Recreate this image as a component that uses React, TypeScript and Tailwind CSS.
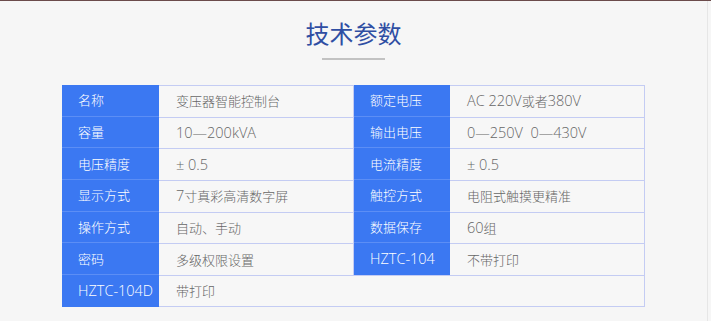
import React from "react";

const rows: [string, string, string, string][] = [
  ["名称", "变压器智能控制台", "额定电压", "AC 220V或者380V"],
  ["容量", "10—200kVA", "输出电压", "0—250V  0—430V"],
  ["电压精度", "± 0.5", "电流精度", "± 0.5"],
  ["显示方式", "7寸真彩高清数字屏", "触控方式", "电阻式触摸更精准"],
  ["操作方式", "自动、手动", "数据保存", "60组"],
  ["密码", "多级权限设置", "HZTC-104", "不带打印"],
];

const font = { fontFamily: '"Noto Sans CJK SC", "Noto Sans", sans-serif' };
const latinFont = { fontFamily: '"Open Sans", "Noto Sans CJK SC", sans-serif' };

function Mixed({ text }: { text: string }) {
  const parts = text.match(/[\x00-\x7F±—]+|[^\x00-\x7F±—]+/g) || [];
  return (
    <>
      {parts.map((p, i) =>
        /^[\x00-\x7F±—]+$/.test(p) ? (
          <span key={i} style={latinFont} className="text-[14.5px] leading-[16px] font-light">
            {p}
          </span>
        ) : (
          <span key={i} className="text-[13px] leading-[16px] font-light">
            {p}
          </span>
        )
      )}
    </>
  );
}

function Label({ text, last }: { text: string; last?: boolean }) {
  return (
    <div
      className={
        "flex items-center bg-[#3b78f2] pl-[16px] text-white " +
        (last ? "" : "border-b border-[#5c8ef5]")
      }
    >
      <span className="whitespace-pre text-[13px] leading-[16px]">
        <Mixed text={text} />
      </span>
    </div>
  );
}

function Value({ text, last, span }: { text: string; last?: boolean; span?: boolean }) {
  return (
    <div
      className={
        "flex items-center bg-[#f7f7f7] pl-[17px] text-[#666666] border-t border-r border-[#c4ccf3] " +
        (last ? "border-b " : "") +
        (span ? "col-span-3" : "")
      }
    >
      <span className="whitespace-pre text-[13px] leading-[16px]">
        <Mixed text={text} />
      </span>
    </div>
  );
}

export default function App() {
  return (
    <div className="h-[321px] w-[711px] overflow-hidden border-t border-[#6b4b4b] bg-[#f6f6f6]" style={font}>
      <div className="flex h-full w-[708px] flex-col items-center border-r border-[#e6e6e6]">
        <h1 className="mt-[20px] text-[24px] leading-[24px] font-normal text-[#2f4ea3]">技术参数</h1>
        <div className="mt-[13px] h-[2px] w-[63px] bg-[#c2c2c2]" />
        <div className="mt-[25px] grid grid-cols-[97px_195px_96px_195px] grid-rows-[repeat(7,31.67px)]">
          {rows.map((r, i) => (
            <React.Fragment key={i}>
              <Label text={r[0]} />
              <Value text={r[1]} />
              <Label text={r[2]} last={i === 5} />
              <Value text={r[3]} />
            </React.Fragment>
          ))}
          <Label text="HZTC-104D" last />
          <Value text="带打印" last span />
        </div>
      </div>
    </div>
  );
}
